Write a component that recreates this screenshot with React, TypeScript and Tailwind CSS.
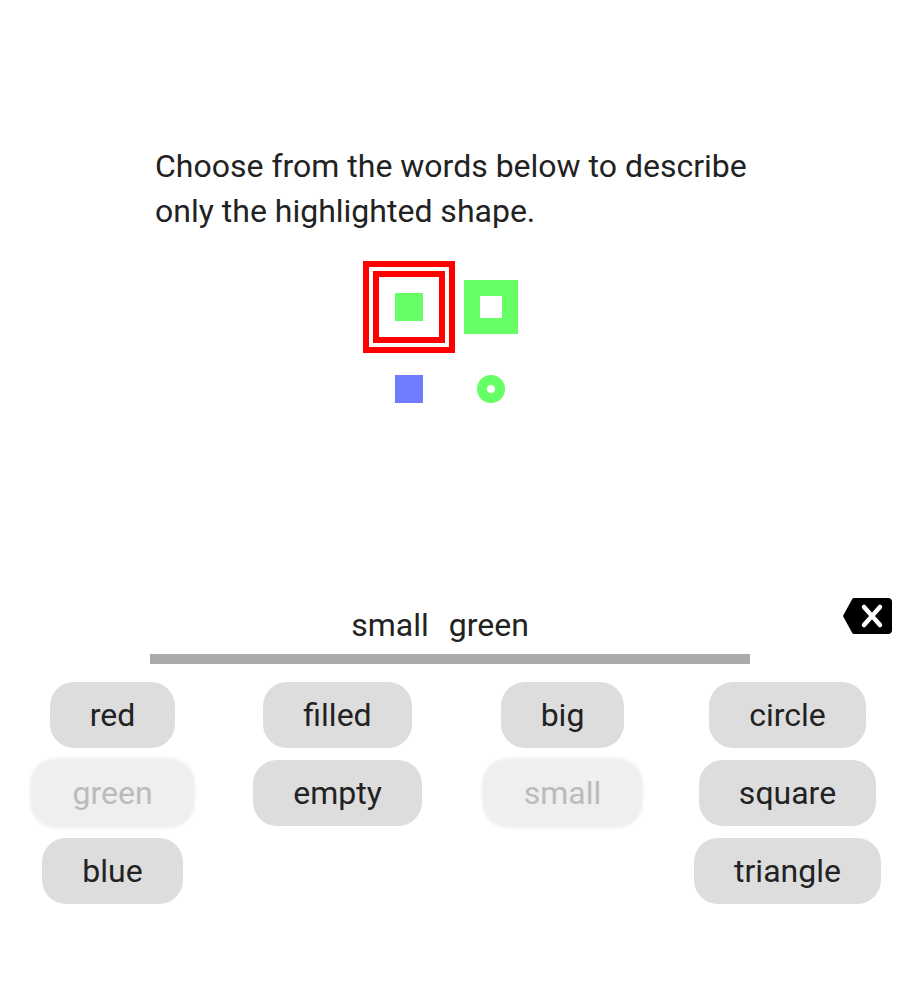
import { useState } from "react";

type Word = { label: string; used?: boolean };

const columns: Word[][] = [
  [{ label: "red" }, { label: "green", used: true }, { label: "blue" }],
  [{ label: "filled" }, { label: "empty" }],
  [{ label: "big" }, { label: "small", used: true }],
  [{ label: "circle" }, { label: "square" }, { label: "triangle" }],
];

function Highlight() {
  return (
    <div className="pointer-events-none absolute left-1/2 top-1/2 flex h-[92px] w-[92px] -translate-x-1/2 -translate-y-1/2 items-center justify-center border-[6px] border-[#ff0000]">
      <div className="h-[72px] w-[72px] border-[6px] border-[#ff0000]" />
    </div>
  );
}

function Cell({ children, highlighted = false }: { children: React.ReactNode; highlighted?: boolean }) {
  return (
    <div className="relative flex h-[82px] w-[82px] items-center justify-center">
      {children}
      {highlighted ? <Highlight /> : null}
    </div>
  );
}

export default function App() {
  const [answer] = useState(["small", "green"]);

  return (
    <div className="min-h-[1000px] w-full bg-white pt-[144px] font-['Roboto',sans-serif] text-[#222222]">
      <p className="mx-auto w-[600px] pl-[5px] text-[32px] leading-[45px]">
        Choose from the words below to describe only the highlighted shape.
      </p>

      <div className="mx-auto mt-[32px] grid w-[164px] grid-cols-2">
        <Cell highlighted>
          <div className="h-[28px] w-[28px] bg-[#66ff66]" />
        </Cell>
        <Cell>
          <div className="flex h-[54px] w-[54px] items-center justify-center bg-[#66ff66]">
            <div className="h-[22px] w-[22px] bg-white" />
          </div>
        </Cell>
        <Cell>
          <div className="h-[28px] w-[28px] bg-[#6e7dff]" />
        </Cell>
        <Cell>
          <div className="h-[28px] w-[28px] rounded-full border-[10px] border-[#66ff66]" />
        </Cell>
      </div>

      <div className="relative mt-[173px]">
        <div className="flex h-[45px] justify-center text-[32px] leading-[45px]">
          {answer.map((word) => (
            <span key={word} className="mr-5">
              {word}
            </span>
          ))}
        </div>
        <button type="button" className="absolute right-[8px] top-[-5px]" title="Delete">
          <svg width="49" height="36" viewBox="0 0 49 36">
            <path d="M11 0H45a4 4 0 0 1 4 4V32a4 4 0 0 1-4 4H11a2 2 0 0 1-1.6-.8L0.6 19.2a2 2 0 0 1 0-2.4L9.4 .8A2 2 0 0 1 11 0Z" fill="#000" />
            <path d="M21 9L37 27M37 9L21 27" stroke="#fff" strokeWidth="4.5" strokeLinecap="round" />
          </svg>
        </button>
      </div>

      <div className="mx-auto mt-[6px] h-[10px] w-[600px] bg-[#aaaaaa]" />

      <div className="mt-[18px] grid grid-cols-4">
        {columns.map((column, i) => (
          <div key={i} className="flex flex-col items-center gap-3">
            {column.map((word) => (
              <button
                key={word.label}
                type="button"
                disabled={word.used}
                className={`h-[66px] rounded-[24px] px-10 text-[32px] leading-[45px] ${
                  word.used ? "bg-[#efefef] text-[#bbbbbb] shadow-[0_0_3px_2px_#efefef]" : "bg-[#dddddd] text-[#222222]"
                }`}
              >
                {word.label}
              </button>
            ))}
          </div>
        ))}
      </div>
    </div>
  );
}
